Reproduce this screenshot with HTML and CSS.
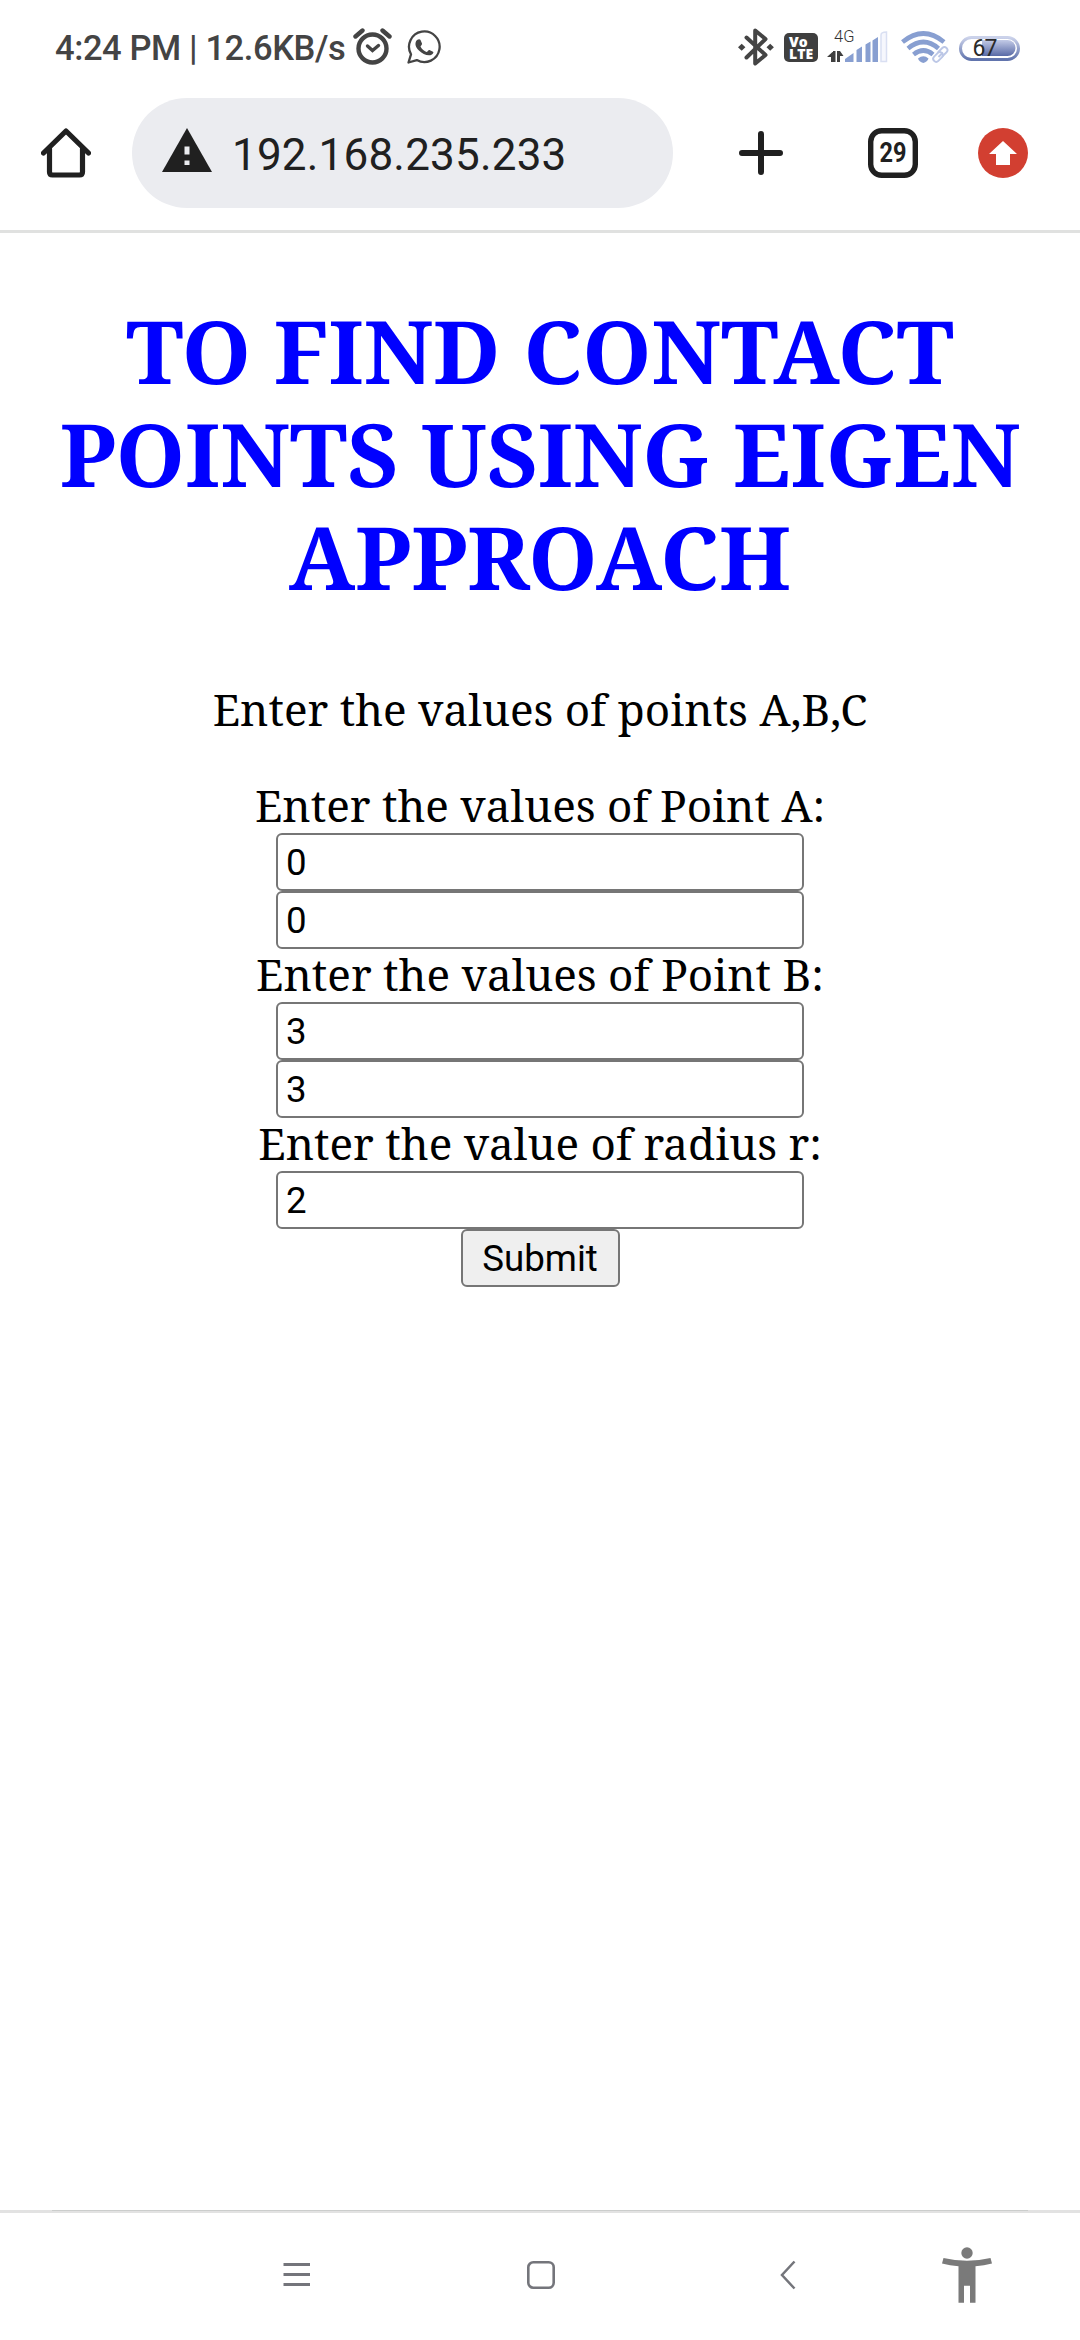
FILE: index.html
```html
<!DOCTYPE html>
<html lang="en">
<head>
<meta charset="utf-8">
<title>Contact points</title>
<link rel="stylesheet" href="styles.css">
</head>
<body>
<div class="status">
  <span class="clock">4:24 PM | 12.6KB/s</span>
  <svg class="alarm" width="40" height="98" viewBox="353 0 40 98" fill="none" stroke="#444" stroke-linecap="round">
    <circle cx="372.500" cy="48.500" r="14" stroke-width="4.400"/>
    <path d="M355.500 36.500l7-6M389.500 36.500l-7-6" stroke-width="4.400"/>
    <path d="M367.500 46l5 4.500 6-5" stroke-width="3.400"/>
  </svg>
  <svg class="whatsapp" width="36" height="98" viewBox="406 0 36 98">
    <path d="M408.500 62.500l2.500-8.200a15.300 15.300 0 1 1 5.800 5.800z" fill="none" stroke="#444" stroke-width="2.300" stroke-linejoin="round"/>
    <path d="M417 40c1.500-1 3-1 3.500 0l1.500 3.500c.5 1-1.500 2.500-1.500 3 1 2.500 3.500 4.500 6 5.500 1 0 2-2.500 3-2l3.500 1.700c1.500 1-1.500 3.800-4 3.600-7-.3-14.500-7.500-13.500-12.300.2-1.300.7-2.300 1.500-3z" fill="#444"/>
  </svg>
  <svg class="bluetooth" width="37" height="98" viewBox="737 0 37 98">
    <path d="M746.500 37.500L765.500 55 755.200 63.500V30.500L765.500 39 746.500 57.500" fill="none" stroke="#444" stroke-width="4" stroke-linecap="round" stroke-linejoin="round"/>
    <path d="M738 47.300l3.700-3.500 3.700 3.500-3.700 3.500zM766.500 47.300l3.700-3.500 3.700 3.500-3.700 3.500z" fill="#444"/>
  </svg>
  <span class="volte"><b>Vo</b><b>LTE</b></span>
  <svg class="signal" width="62" height="98" viewBox="827 0 62 98">
    <text class="net" x="834" y="42">4G</text>
    <path d="M833.500 51v11h-2.500v-5h-4zM835.500 51v11h-2.500V51zM837 62V51h3l3.500 5h-3.500v6z" fill="#3f3f3f"/>
    <path d="M845 62v-3l8.500-6v9zM856.500 62V50l5.500-3.500V62zM865.500 62V44.500l5-3V62zM872.500 62V40.500l5.500-3.500v25z" fill="#889fd1"/>
    <path d="M881 61.500V35q0-3 5.500-3v29.500z" fill="#f6f7fd" stroke="#d9dff2" stroke-width="1.500"/>
  </svg>
  <svg class="wifi" width="49" height="98" viewBox="901 0 49 98">
    <g fill="none" stroke="#889fd1" stroke-width="4.600">
      <path d="M902.500 42q21-17 41.500 0M908 48.500q15.500-13 30.500 0M913.500 54.500q10-8 19.500 0"/>
    </g>
    <path d="M918 58.500q5.500-4.500 10.500 0-1 3-5.200 4.500-4.300-1.500-5.300-4.500z" fill="#889fd1"/>
    <g fill="#fff" stroke="#bcc7e6" stroke-width="1.900">
      <rect x="937" y="48.500" width="11" height="6" rx="3" transform="rotate(-45 943 51.500)"/>
      <rect x="932.500" y="54" width="11" height="6" rx="3" transform="rotate(-45 938 57)"/>
      <path d="M938.500 57l4.500-4.500"/>
    </g>
  </svg>
  <svg class="battery" width="62" height="98" viewBox="959 0 62 98">
    <defs>
      <linearGradient id="rim" x2="0" y2="1"><stop stop-color="#cbd2ea"/><stop offset="1" stop-color="#6174ad"/></linearGradient>
      <linearGradient id="charge" x2="0" y2="1"><stop stop-color="#c3cbe7"/><stop offset="1" stop-color="#596aa6"/></linearGradient>
    </defs>
    <rect x="960.500" y="37.500" width="58" height="22" rx="11" fill="#fff" stroke="url(#rim)" stroke-width="3"/>
    <path d="M982 40h25.500a8 8 0 0 1 0 16H982z" fill="url(#charge)"/>
    <text class="percent" x="972.500" y="56" textLength="25">67</text>
  </svg>
</div>
<div class="toolbar">
  <svg class="home" width="50" height="50" viewBox="41 128 50 50" fill="none" stroke="#202020" stroke-width="5.200" stroke-linecap="round" stroke-linejoin="round">
    <path d="M43.500 153L66 131l22.500 22M49.500 149v23q0 3 3 3h27q3 0 3-3v-23"/>
  </svg>
  <div class="address">
    <svg width="50" height="44" viewBox="0 0 50 44"><path d="M25 0l25 44H0z" fill="#202020"/><path d="M22.500 18.500h5v8h-5zM22.500 32.500h5v4.500h-5z" fill="#ebecf0"/></svg>
    <span>192.168.235.233</span>
  </div>
  <svg class="plus" width="44" height="44" viewBox="0 0 44 44"><path d="M22 3v38M3 22h38" stroke="#202020" stroke-width="6" stroke-linecap="round"/></svg>
  <svg class="tabs" width="50" height="50" viewBox="0 0 50 50"><rect x="2.700" y="2.700" width="44.600" height="44.600" rx="11" fill="none" stroke="#202020" stroke-width="5.400"/><text class="count" x="11.500" y="34" textLength="27" lengthAdjust="spacingAndGlyphs">29</text></svg>
  <svg class="update" width="50" height="50" viewBox="0 0 50 50"><circle cx="25" cy="25" r="25" fill="#d23f31"/><path d="M25 13l14 13h-7v11H18V26h-7z" fill="#fff"/></svg>
</div>
<main class="page">
  <h1><span>TO FIND CONTACT</span><span>POINTS USING EIGEN</span><span>APPROACH</span></h1>
  <p>Enter the values of points A,B,C</p>
  <form>
    <label>Enter the values of Point A:</label>
    <input value="0">
    <input value="0">
    <label>Enter the values of Point B:</label>
    <input value="3">
    <input value="3">
    <label>Enter the value of radius r:</label>
    <input value="2">
    <button type="button">Submit</button>
  </form>
</main>
<nav class="nav">
  <div class="edge"></div>
  <div class="keys">
    <svg class="recents" width="28" height="30" viewBox="0 0 28 30"><path d="M.5 4.500h26.500M.5 14.500h26.500M.5 24.500h26.500" stroke="#74757b" stroke-width="2.800"/></svg>
    <svg class="square" width="28" height="30" viewBox="0 0 28 30"><rect x="1.300" y="2.300" width="25.400" height="25.400" rx="5" fill="none" stroke="#74757b" stroke-width="2.600"/></svg>
    <svg class="back" width="16" height="30" viewBox="0 0 16 30"><path d="M14.500 1.500L2 15l12.500 13.500" fill="none" stroke="#74757b" stroke-width="2.500"/></svg>
    <svg class="person" width="50" height="57" viewBox="942 2247 50 57"><circle cx="967" cy="2253" r="5.700" fill="#7a7a7a"/><path d="M943.500 2258q23.500 5.500 47 0l1.500 5.500q-8 2.200-16.500 2.700v36.500H970v-17h-6v17h-5.500v-36.500q-8.500-.5-16.500-2.700z" fill="#7a7a7a"/></svg>
  </div>
</nav>
</body>
</html>
```
FILE: styles.css
```css
* { box-sizing: border-box; }
body {
  margin: 0;
  width: 1080px;
  height: 2340px;
  display: flex;
  flex-direction: column;
  background: #fff;
  color: #000;
  font-family: Roboto, sans-serif;
  overflow: hidden;
}
svg { display: block; flex: none; }
.status { display: flex; align-items: center; height: 98px; padding-left: 55px; flex: none; }
.clock { width: 298px; padding-bottom: 2px; font-size: 34.5px; font-weight: 500; line-height: 40px; letter-spacing: -.4px; color: #444; white-space: nowrap; flex: none; }
.whatsapp { margin-left: 13px; }
.bluetooth { margin-left: 295px; }
.volte {
  width: 34px; height: 29px; margin: 0 9px 3px 10px; padding: 3px 0 0 5px;
  border-radius: 5px; background: #3f3f3f; color: #fff;
  display: flex; flex-direction: column; flex: none;
  font: 800 14px/12px "Open Sans", sans-serif;
}
.volte b { font-weight: 800; }
.net { font: 300 16.5px Roboto, sans-serif; fill: #333; }
.wifi { margin-left: 12px; }
.battery { margin-left: 9px; }
.percent { font: 400 23px Roboto, sans-serif; fill: #2a2a2a; }
.toolbar { display: flex; align-items: center; height: 135px; flex: none; padding: 0 0 22px 41px; border-bottom: 3px solid #e0e1e0; }
.address {
  display: flex; align-items: center; width: 541px; height: 110px;
  margin-left: 41px; padding-left: 30px; border-radius: 55px;
  background: #ebecf0; color: #202020; font-size: 44px; letter-spacing: .2px; flex: none;
}
.address svg { margin-bottom: 7px; }
.address span { margin-left: 20px; padding-top: 3px; }
.plus { margin-left: 66px; }
.tabs { margin-left: 85px; }
.count { font: 700 28px Roboto, sans-serif; fill: #202020; }
.update { margin-left: 60px; }
.page { flex: 1; padding: 66px 22px 0; text-align: center; font: 44px/60px "Noto Serif", "DejaVu Serif Condensed", "DejaVu Serif", serif; }
h1 { margin: 0; color: #00f; font-size: 88px; font-weight: 700; line-height: 103px; }
h1 span { display: block; white-space: nowrap; }
p { margin: 71px 0 41px; }
form { display: flex; flex-direction: column; align-items: center; }
label { height: 53px; line-height: 50px; }
input {
  width: 528px; height: 58px; margin: 0; padding: 0 8px;
  border: 2px solid #767676; border-radius: 6px; background: #fff; color: #000;
  font: 36.67px Roboto, sans-serif;
}
button {
  width: 159px; height: 58px; padding: 0; border: 2px solid #767676; border-radius: 6px;
  background: #efefef; color: #000; font: 36.67px Roboto, sans-serif;
}
.nav { height: 130px; flex: none; }
.edge { height: 3px; background: linear-gradient(#cbcdcc, #cbcdcc) 52px 0 / 976px 1px no-repeat #e2e2e2; }
.keys { display: flex; align-items: center; height: 124px; padding-left: 283px; }
.square { margin-left: 216px; }
.back { margin-left: 225px; }
.person { margin-left: 146px; }
```
